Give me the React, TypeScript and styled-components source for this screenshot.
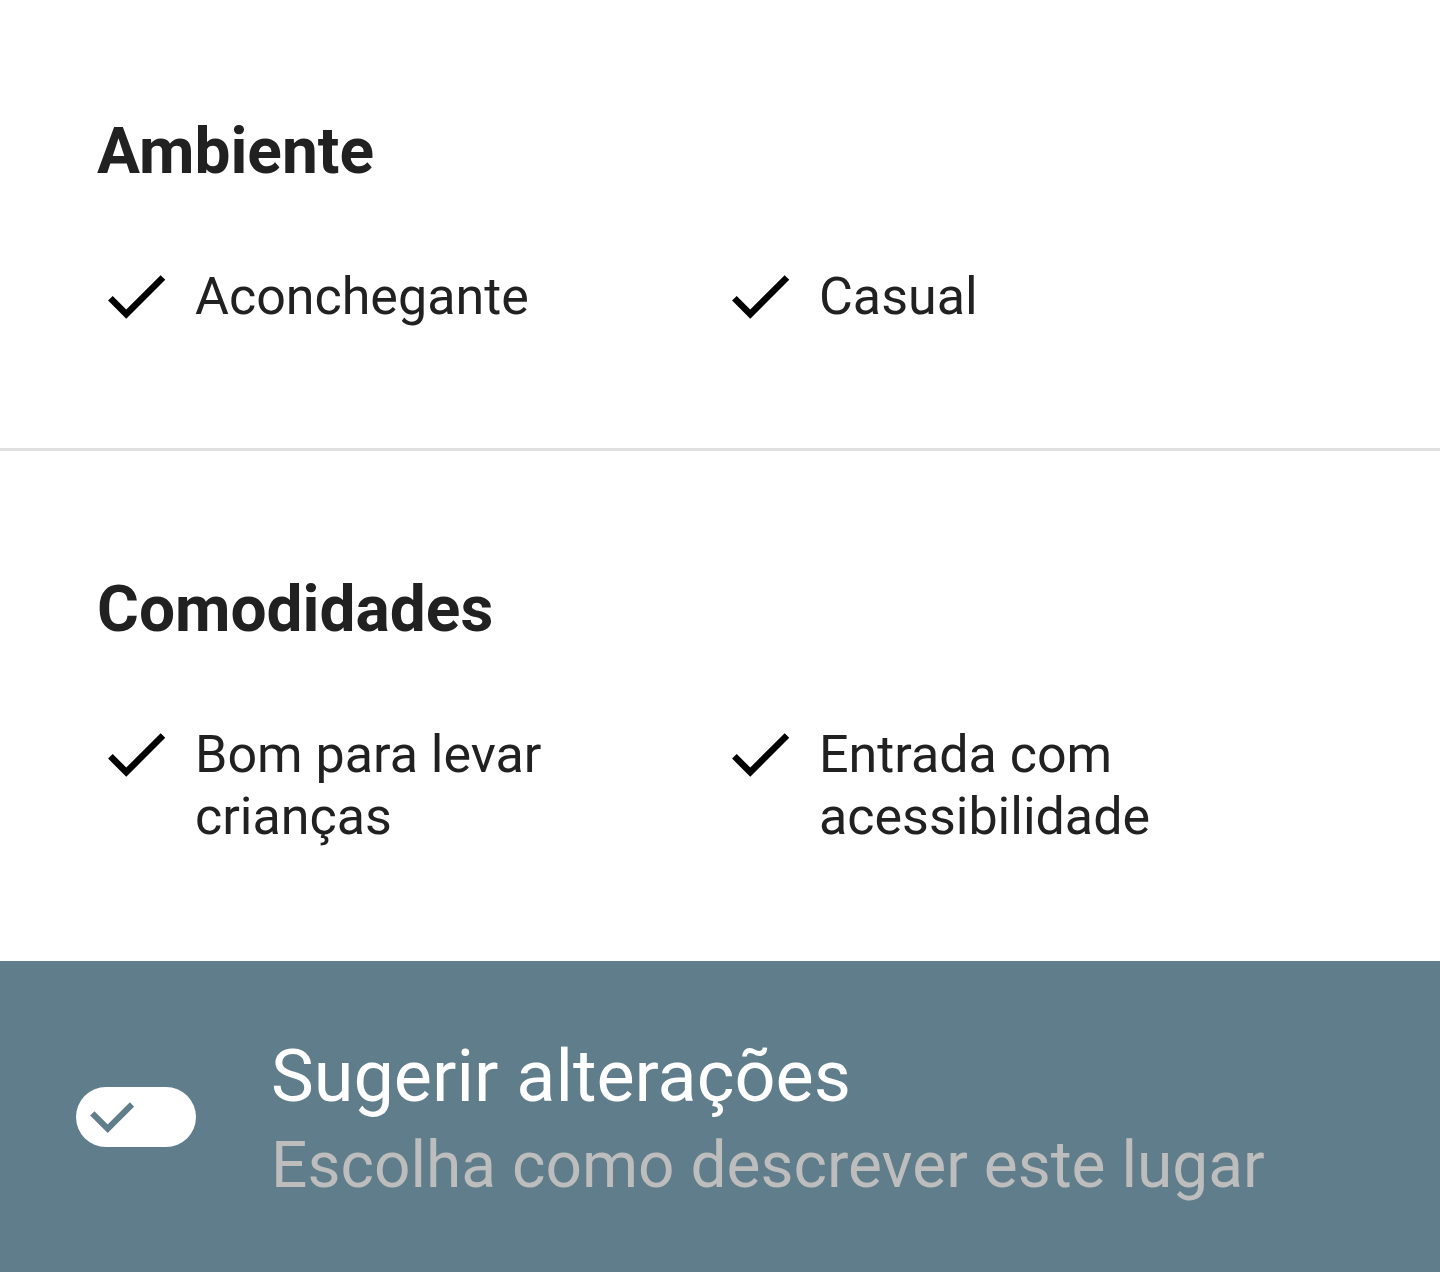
import React from 'react';
import styled, { createGlobalStyle } from 'styled-components';

interface Feature {
  id: number;
  label: string;
}

interface FeatureGroup {
  title: string;
  features: Feature[];
}

const groups: FeatureGroup[] = [
  {
    title: 'Ambiente',
    features: [
      { id: 1, label: 'Aconchegante' },
      { id: 2, label: 'Casual' },
    ],
  },
  {
    title: 'Comodidades',
    features: [
      { id: 3, label: 'Bom para levar crianças' },
      { id: 4, label: 'Entrada com acessibilidade' },
    ],
  },
];

const GlobalStyle = createGlobalStyle`
  html, body {
    margin: 0;
    padding: 0;
    background: #ffffff;
  }
  body {
    font-family: Roboto, "Noto Sans", sans-serif;
    -webkit-font-smoothing: antialiased;
  }
`;

const Page = styled.div`
  width: 1440px;
  height: 1272px;
  overflow: hidden;
  display: flex;
  flex-direction: column;
  background: #ffffff;
`;

const Section = styled.section<{ first?: boolean }>`
  padding: ${p => (p.first ? '114px' : '121px')} 97px 113px 97px;
  display: flex;
  flex-direction: column;
  gap: 67px;
`;

const Heading = styled.h2`
  margin: 0;
  font-size: 64px;
  line-height: 76px;
  font-weight: 700;
  color: #212121;
`;

const FeatureGrid = styled.div`
  display: grid;
  grid-template-columns: 1fr 1fr;
  column-gap: 2px;
`;

const FeatureRow = styled.div`
  display: flex;
  align-items: flex-start;
  gap: 20px;
  padding-right: 80px;
`;

const CheckIcon = styled.svg`
  flex: none;
  width: 78px;
  height: 78px;
  fill: #000000;
`;

const FeatureLabel = styled.span`
  margin-top: 9px;
  font-size: 52px;
  line-height: 62px;
  color: #212121;
`;

const Divider = styled.hr`
  margin: 0;
  border: 0;
  height: 3px;
  background: #e0e0e0;
`;

const SuggestPanel = styled.div`
  flex: 1;
  background: #607d8b;
  display: flex;
  align-items: flex-start;
  padding: 71px 0 0 76px;
  gap: 75px;
`;

const Toggle = styled.div`
  flex: none;
  margin-top: 55px;
  width: 120px;
  height: 60px;
  border-radius: 30px;
  background: #ffffff;
  display: flex;
  align-items: center;
  padding-left: 14px;
  box-sizing: border-box;
`;

const ToggleCheck = styled.svg`
  width: 44px;
  height: 32px;
  fill: none;
  stroke: #607d8b;
  stroke-width: 6;
  stroke-linecap: butt;
  stroke-linejoin: miter;
`;

const PanelText = styled.div`
  display: flex;
  flex-direction: column;
`;

const PanelTitle = styled.div`
  font-size: 72px;
  line-height: 90px;
  color: #ffffff;
`;

const PanelSubtitle = styled.div`
  font-size: 64px;
  line-height: 88px;
  color: #bdbdbd;
`;

const checkPath = 'M9 16.17L4.83 12l-1.42 1.41L9 19 21 7l-1.41-1.41z';

const FeatureItem: React.FC<{ feature: Feature }> = ({ feature }) => (
  <FeatureRow>
    <CheckIcon viewBox="0 0 24 24">
      <path d={checkPath} />
    </CheckIcon>
    <FeatureLabel>{feature.label}</FeatureLabel>
  </FeatureRow>
);

const App: React.FC = () => {
  return (
    <Page>
      <GlobalStyle />
      {groups.map((g, i) => (
        <React.Fragment key={g.title}>
          {i > 0 && <Divider />}
          <Section first={i === 0}>
            <Heading>{g.title}</Heading>
            <FeatureGrid>
              {g.features.map(f => (
                <FeatureItem key={f.id} feature={f} />
              ))}
            </FeatureGrid>
          </Section>
        </React.Fragment>
      ))}
      <SuggestPanel>
        <Toggle>
          <ToggleCheck viewBox="0 0 44 32">
            <polyline points="2.3,12.3 17.7,27.7 42,3.4" />
          </ToggleCheck>
        </Toggle>
        <PanelText>
          <PanelTitle>Sugerir alterações</PanelTitle>
          <PanelSubtitle>Escolha como descrever este lugar</PanelSubtitle>
        </PanelText>
      </SuggestPanel>
    </Page>
  );
};

export default App;
